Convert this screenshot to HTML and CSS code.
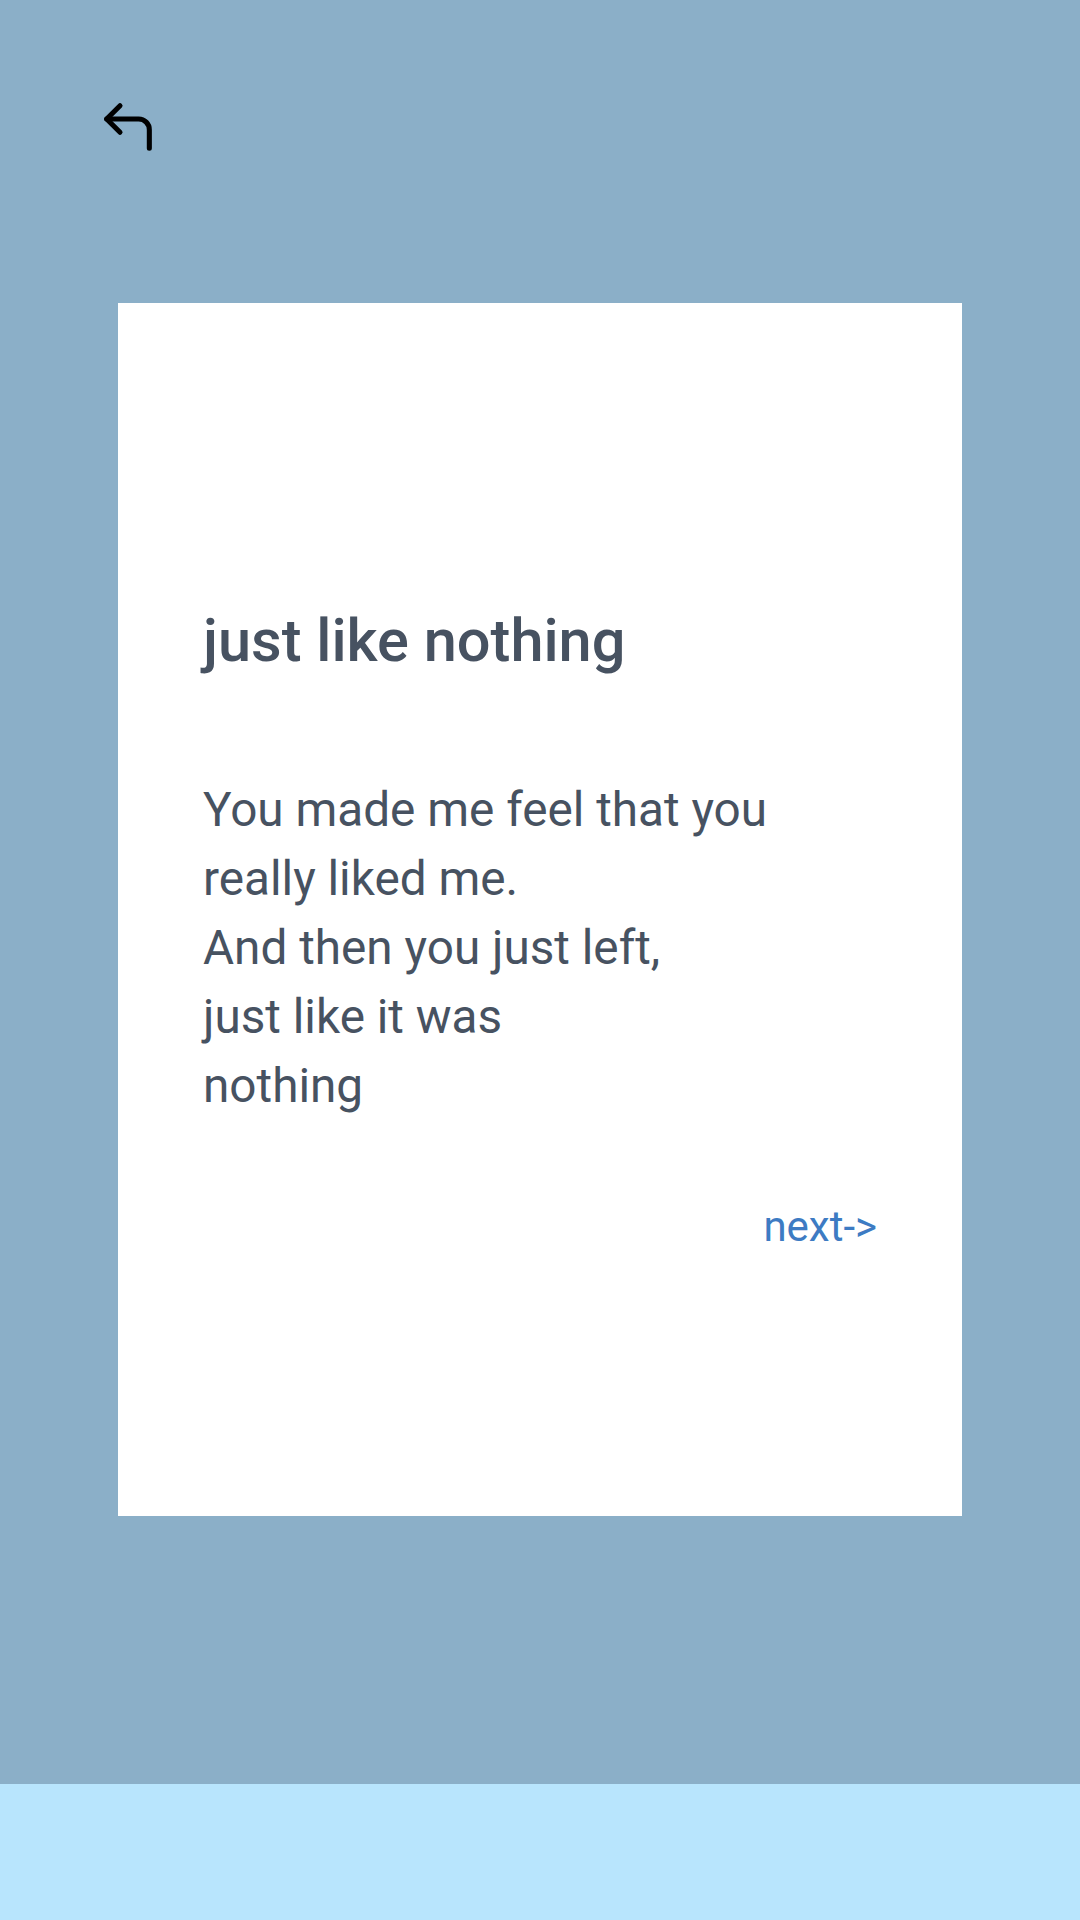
FILE: index.html
```html
<!DOCTYPE html>
<html>
<head>
<meta charset="utf-8">
<link rel="stylesheet" href="styles.css">
</head>
<body>
<div class="screen">
  <div class="top">
    <svg class="back" viewBox="0 0 24 24" fill="none" stroke="#000" stroke-width="1.9" stroke-linecap="round" stroke-linejoin="round">
      <polyline points="9 14 4 9 9 4"></polyline>
      <path d="M20 20v-7a4 4 0 0 0-4-4H4"></path>
    </svg>
  </div>
  <div class="card">
    <h1 class="title">just like nothing</h1>
    <p class="poem">You made me feel that you<br>really liked me.<br>And then you just left,<br>just like it was<br>nothing</p>
    <div class="nav"><a class="next">next-&gt;</a></div>
  </div>
</div>
<div class="bottom"></div>
</body>
</html>
```
FILE: styles.css
```css
html, body {
  margin: 0;
  padding: 0;
}
body {
  width: 1080px;
  height: 1920px;
  display: flex;
  flex-direction: column;
  font-family: Roboto, "Liberation Sans", sans-serif;
  background: #8bafc8;
}
.screen {
  height: 1784px;
  background: #8bafc8;
  display: flex;
  flex-direction: column;
}
.top {
  height: 303px;
  padding-left: 96px;
  padding-top: 95px;
  box-sizing: border-box;
}
.back {
  width: 64px;
  height: 64px;
  display: block;
}
.card {
  margin-left: 118px;
  width: 844px;
  height: 1213px;
  background: #fff;
  box-sizing: border-box;
  padding: 302px 85px 0 85px;
}
.title {
  margin: 0;
  font-size: 59.5px;
  line-height: 72px;
  font-weight: 500;
  color: #475261;
}
.poem {
  margin: 99px 0 0 0;
  font-size: 47.7px;
  line-height: 69px;
  font-weight: 400;
  color: #475261;
}
.nav {
  margin-top: 81px;
  display: flex;
  justify-content: flex-end;
}
.next {
  font-size: 42px;
  line-height: 50px;
  color: #3d7bc3;
}
.bottom {
  height: 136px;
  background: #b8e5fd;
}
```
